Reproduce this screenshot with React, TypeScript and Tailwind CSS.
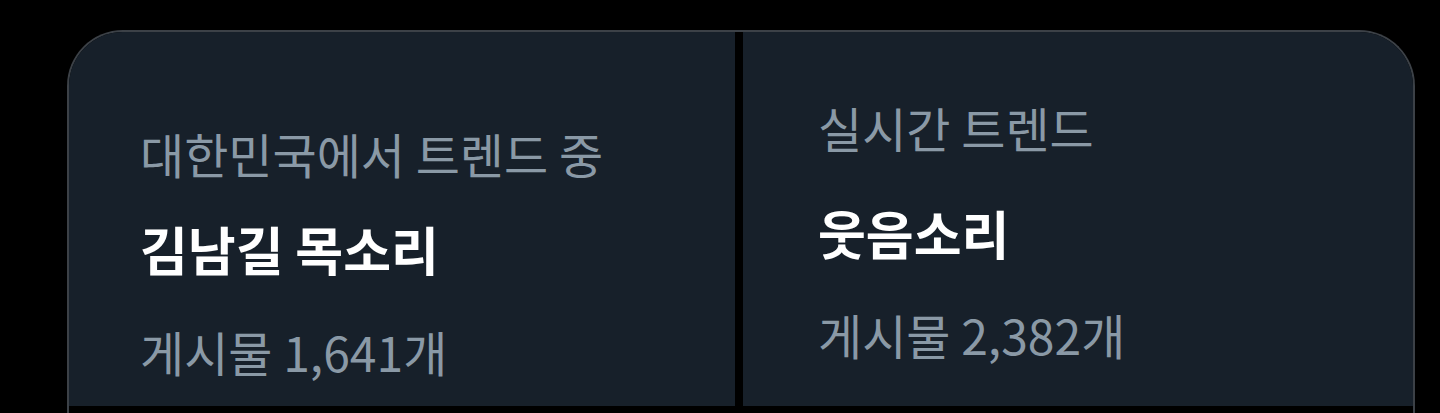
import React from "react";

const font = { fontFamily: '"Noto Sans CJK KR", "Noto Sans", sans-serif' };

export default function App() {
  return (
    <div className="w-[1440px] h-[413px] bg-black overflow-hidden" style={font}>
      <div className="pt-[30px] pl-[67px] pr-[25px] h-full">
        <div className="h-full border-2 border-b-0 border-[#3c4147] rounded-t-[56px] overflow-hidden bg-black flex gap-[8px] pb-[7px]">
          <div className="flex-1 bg-[#17202a] flex flex-col pl-[71px] pt-[97px]">
            <div className="text-[48px] leading-[48px] text-[#8a99a6] whitespace-nowrap">대한민국에서 트렌드 중</div>
            <div className="mt-[46px] text-[52px] leading-[52px] font-bold text-white whitespace-nowrap">김남길 목소리</div>
            <div className="mt-[52px] text-[48px] leading-[48px] text-[#8a99a6] whitespace-nowrap">게시물 1,641개</div>
          </div>
          <div className="flex-1 bg-[#17202a] flex flex-col pl-[75px] pt-[71px]">
            <div className="text-[48px] leading-[48px] text-[#8a99a6] whitespace-nowrap">실시간 트렌드</div>
            <div className="mt-[56px] text-[52px] leading-[52px] font-bold text-white whitespace-nowrap">웃음소리</div>
            <div className="mt-[51px] text-[48px] leading-[48px] text-[#8a99a6] whitespace-nowrap">게시물 2,382개</div>
          </div>
        </div>
      </div>
    </div>
  );
}
